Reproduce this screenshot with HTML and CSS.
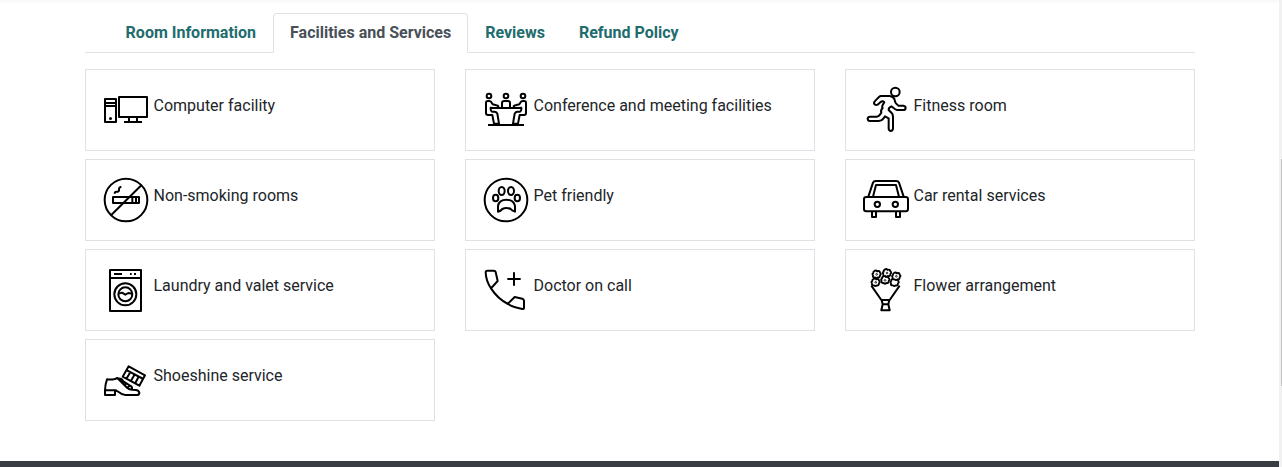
FILE: index.html
```html
<!DOCTYPE html>
<html lang="en">
<head>
<meta charset="utf-8">
<title>Facilities and Services</title>
<link rel="stylesheet" href="styles.css">
</head>
<body>
<div class="page">
<main class="container">
  <nav class="tabs">
    <a class="tab">Room Information</a>
    <a class="tab active">Facilities and Services</a>
    <a class="tab">Reviews</a>
    <a class="tab">Refund Policy</a>
  </nav>
  <section class="grid">
    <div class="card">
      <svg class="icon" viewBox="15 15 150 150"><path d="M27 57H60V126H27ZM27 69H60M27 78H60M69 51H153V111H69ZM99 111V126M123 111V126M84 126H138"/><circle class="solid" cx="43.5" cy="115.5" r="4.5"/></svg>
      <span>Computer facility</span>
    </div>
    <div class="card">
      <svg class="icon" viewBox="15 15 150 150"><circle cx="39" cy="48" r="7"/><circle cx="90" cy="48" r="7"/><circle cx="141" cy="48" r="7"/><path d="M36 135H144M44 84H136M78 82V70Q78 63 85 63H96Q102 63 102 70V82M44 83Q64 85 67 81Q67 76 61 76L50 73L45 65Q42 62 35 63Q30 63 30 69V99Q30 105 36 105H49L54 131H69L64 101Q62 96 56 95H48Q44 94 44 88ZM136 83Q116 85 113 81Q113 76 119 76L130 73L135 65Q138 62 145 63Q150 63 150 69V99Q150 105 144 105H131L126 131H111L116 101Q118 96 124 95H132Q136 94 136 88Z"/></svg>
      <span>Conference and meeting facilities</span>
    </div>
    <div class="card">
      <svg class="icon" viewBox="15 15 150 150"><circle cx="118" cy="36" r="13"/><path d="M75 48H101Q112 49 116 59Q116 65 120 70L127 77H142Q149 78 149 84Q148 90 142 90H123Q117 89 113 84L106 79Q97 83 98 90L107 99Q111 103 111 110V145Q110 153 104 153Q98 152 98 145V115L87 109L82 116Q77 123 68 123H42Q35 122 35 116Q36 110 42 110H62Q68 110 72 104L76 98Q73 91 80 84Q77 80 80 75L85 67Q80 61 73 67L65 74Q58 77 54 71Q53 66 58 62L69 51Q72 48 75 48Z"/></svg>
      <span>Fitness room</span>
    </div>
    <div class="card">
      <svg class="icon" viewBox="15 15 150 150"><circle cx="90" cy="90" r="64"/><path d="M45 136L136 46M51 81H129V99H51ZM109 81V99M120 81V99M56 71Q56 65 61 65H65Q70 64 69 58Q69 51 76 50"/></svg>
      <span>Non-smoking rooms</span>
    </div>
    <div class="card">
      <svg class="icon" viewBox="15 15 150 150"><circle cx="90" cy="90" r="64"/><ellipse cx="77" cy="63" rx="9" ry="12"/><ellipse cx="105" cy="63" rx="9" ry="12"/><ellipse cx="59" cy="84" rx="8" ry="10"/><ellipse cx="124" cy="84" rx="8" ry="10"/><path d="M66 125V107Q70 89 91 89Q112 89 117 107V125Q108 122 104 117Q91 111 79 117Q74 123 66 125Z"/></svg>
      <span>Pet friendly</span>
    </div>
    <div class="card">
      <svg class="icon" viewBox="15 15 150 150"><path d="M37 80L51 38Q53 33 60 33H120Q127 33 129 38L143 80M51 80L60 45H120L129 80M31 81H149Q156 81 156 88V117Q156 124 149 124H31Q24 124 24 117V88Q24 81 31 81ZM48 126V141H60V126M120 126V141H132V126"/><circle cx="64" cy="103" r="8"/><circle cx="118" cy="103" r="8"/></svg>
      <span>Car rental services</span>
    </div>
    <div class="card">
      <svg class="icon" viewBox="15 15 150 150"><path d="M42 30H135V153H42ZM42 54H135M54 42H78M102 42H107M114 42H120M69 101L78 98L88 104L97 99L109 101"/><circle cx="88" cy="103" r="33"/><circle cx="88" cy="103" r="21"/></svg>
      <span>Laundry and valet service</span>
    </div>
    <div class="card">
      <svg class="icon" viewBox="15 15 150 150"><path d="M94 57H134M114 37V77M47 83L65 63L59 36Q58 32 53 32L34 32Q29 32 29 37Q30 64 45 85Q65 116 96 132Q112 141 139 147Q144 147 144 143V122Q143 117 139 116L116 111L96 131"/></svg>
      <span>Doctor on call</span>
    </div>
    <div class="card">
      <svg class="icon" viewBox="15 15 150 150">
        <defs><path id="bloom" d="M-7 -10Q-2 -14 2 -9Q9 -12 10 -5Q15 -1 10 3Q10 11 3 9Q-1 13 -5 9Q-13 10 -11 3Q-15 -2 -10 -4Q-11 -8 -7 -10Z"/></defs>
        <path d="M46 77L76 120H101L131 77M77 120L80 133L76 151H101L97 133L100 120M79 133H98"/>
        <g class="flowers"><use href="#bloom" x="116" y="67"/><use href="#bloom" x="88" y="60"/><use href="#bloom" x="62" y="43"/><use href="#bloom" x="59" y="67"/><use href="#bloom" x="121" y="49"/><use href="#bloom" x="93" y="39"/></g>
        <g class="seeds"><circle cx="62" cy="43" r="2.5"/><circle cx="59" cy="67" r="2.5"/><circle cx="93" cy="39" r="2.5"/><circle cx="121" cy="49" r="2.5"/><circle cx="87" cy="61" r="2.5"/></g>
      </svg>
      <span>Flower arrangement</span>
    </div>
    <div class="card">
      <svg class="icon" viewBox="15 15 150 150"><path d="M27 121Q28 101 33 88Q44 90 57 87L64 84L94 114Q101 120 119 120Q128 121 130 128Q130 135 122 135H88Q79 135 68 126L60 121ZM27 121V135H57V122M65 86Q77 84 82 94L104 108Q109 110 108 118M76 96L83 91M85 105L92 99M94 113L101 107M98 49L147 76L130 107L80 80ZM93 61L142 87M102 68L92 85M115 75L105 92M127 82L118 99"/></svg>
      <span>Shoeshine service</span>
    </div>
  </section>
</main>
<footer class="footer"></footer>
</div>
<div class="scrollbar"><div class="thumb"></div></div>
</body>
</html>
```
FILE: styles.css
```css
* { box-sizing: border-box; }
body {
  margin: 0;
  height: 467px;
  display: flex;
  overflow: hidden;
  background: #fff;
  color: #212529;
  font: 16px/24px Roboto, sans-serif;
}
.page {
  width: 1279px;
  display: flex;
  flex-direction: column;
  background: linear-gradient(#f7f7f7, #fff 4px);
}
.container { flex: 1; padding: 13px 84px 0 85px; }
.tabs {
  display: flex;
  height: 40px;
  padding-left: 23.6px;
  border-bottom: 1px solid #dee2e6;
}
.tab {
  height: 40px;
  padding: 7px 16px;
  border: 1px solid transparent;
  color: #216c6d;
  font-weight: 700;
}
.tab.active {
  color: #495057;
  background: #fff;
  border-color: #dee2e6 #dee2e6 #fff;
  border-radius: 4px 4px 0 0;
}
.grid {
  display: grid;
  grid-template-columns: repeat(3, 350px);
  grid-auto-rows: 82px;
  gap: 8px 30px;
  margin-top: 16px;
}
.card {
  display: flex;
  gap: 2.5px;
  padding: 15px;
  border: 1px solid #dee2e6;
}
.card span { margin-top: 9px; }
.icon {
  width: 50px;
  height: 50px;
  flex: none;
  fill: none;
  stroke: #000;
  stroke-width: 6;
  stroke-linejoin: round;
}
.icon .solid { fill: #000; stroke: none; }
.flowers { fill: #fff; stroke-width: 5.5; }
.seeds { stroke-width: 2.5; }
.footer { height: 6px; background: #3a3c44; }
.scrollbar { width: 3px; padding: 159px 0 0 2px; background: #f1f1f1; }
.thumb { height: 227px; background: #c1c1c1; }
```
